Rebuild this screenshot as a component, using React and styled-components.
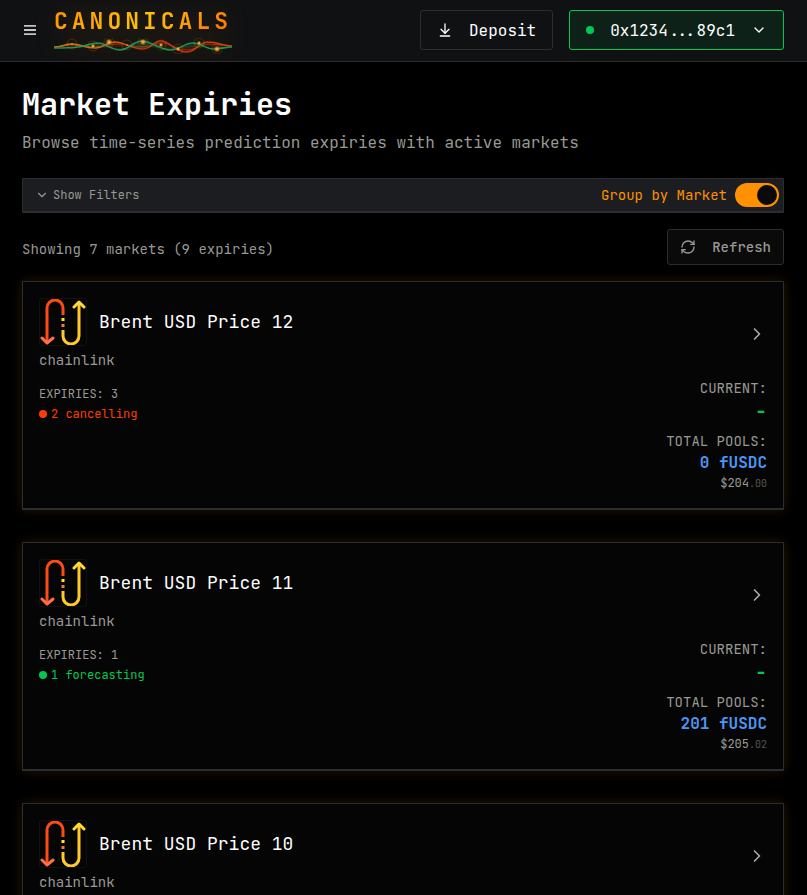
import React, { useState } from 'react';
import styled, { createGlobalStyle, ThemeProvider } from 'styled-components';
import { ArrowDownToLine, ChevronDown, ChevronRight, RefreshCw } from 'lucide-react';

const theme = {
    colors: {
        page: '#000000',
        header: '#101113',
        card: '#050505',
        bar: '#1c1d20',
        border: '#2b2d31',
        white: '#ffffff',
        grey: '#999994',
        dim: '#55544f',
        orange: '#ff9100',
        red: '#ff3d00',
        green: '#00c853',
        blue: '#4c97f5',
    },
};

const GlobalStyle = createGlobalStyle`
    * {
        box-sizing: border-box;
    }
    body {
        margin: 0;
        background: ${props => props.theme.colors.page};
        color: ${props => props.theme.colors.white};
        font-family: "JetBrains Mono", "DejaVu Sans Mono", monospace;
    }
    button {
        font-family: inherit;
        cursor: pointer;
    }
    h1, h2, p {
        margin: 0;
    }
`;

const Header = styled.header`
    display: flex;
    align-items: center;
    justify-content: space-between;
    height: 62px;
    padding: 0 23px 1px 22px;
    background: ${props => props.theme.colors.header};
    border-bottom: 1px solid ${props => props.theme.colors.border};
`;

const HeaderGroup = styled.div`
    display: flex;
    align-items: center;
    gap: 16px;
`;

const MenuButton = styled.button`
    display: flex;
    padding: 0 2px;
    border: none;
    background: none;
    color: #c4c4c4;
`;

const Brand = styled.a`
    display: flex;
    flex-direction: column;
    gap: 2px;
    width: 178px;
    color: ${props => props.theme.colors.orange};
    text-decoration: none;
    filter: drop-shadow(0 0 12px rgba(255, 145, 0, 0.2));
`;

const BrandName = styled.span`
    font-size: 23px;
    font-weight: 600;
    letter-spacing: 4px;
    line-height: 30px;
    white-space: nowrap;
    background: linear-gradient(135deg, #ff9100 0%, #ffc107 50%, #ff6d00 100%);
    background-clip: text;
    color: transparent;
`;

const HeaderButton = styled.button`
    display: flex;
    align-items: center;
    gap: 16px;
    height: 40px;
    padding: 0 16px;
    border: 1px solid ${props => props.$active ? props.theme.colors.green : props.theme.colors.border};
    border-radius: 3px;
    background: ${props => props.$active ? '#0e2118' : 'transparent'};
    color: ${props => props.theme.colors.white};
    font-size: 16px;
`;

const Dot = styled.span`
    width: 8px;
    height: 8px;
    border-radius: 50%;
    background: currentColor;
`;

const OnlineDot = styled(Dot)`
    background: ${props => props.theme.colors.green};
`;

const Main = styled.main`
    padding: 24px 23px 32px 22px;
`;

const Title = styled.h1`
    font-size: 30px;
    font-weight: 600;
    line-height: 36px;
`;

const Tagline = styled.p`
    margin-top: 8px;
    font-size: 16px;
    line-height: 26px;
    color: ${props => props.theme.colors.grey};
`;

const FilterBar = styled.div`
    display: flex;
    align-items: center;
    justify-content: space-between;
    height: 35px;
    margin-top: 22px;
    padding: 0 4px 0 12px;
    border: 1px solid ${props => props.theme.colors.border};
    border-bottom-width: 2px;
    border-radius: 1px;
    background: ${props => props.theme.colors.bar};
`;

const FilterButton = styled.button`
    display: flex;
    align-items: center;
    gap: 4px;
    padding: 0;
    border: none;
    background: none;
    color: ${props => props.theme.colors.grey};
    font-size: 12px;
`;

const ToggleLabel = styled.label`
    display: flex;
    align-items: center;
    gap: 8px;
    color: ${props => props.theme.colors.orange};
    font-size: 14px;
    cursor: pointer;
`;

const Toggle = styled.input`
    appearance: none;
    display: flex;
    width: 44px;
    height: 24px;
    margin: 0;
    padding: 2px;
    border-radius: 12px;
    background: ${props => props.checked ? props.theme.colors.orange : props.theme.colors.border};
    justify-content: ${props => props.checked ? 'flex-end' : 'flex-start'};
    cursor: pointer;
    &::before {
        content: '';
        width: 20px;
        height: 20px;
        border-radius: 50%;
        background: #0a0a0a;
    }
`;

const SummaryRow = styled.div`
    display: flex;
    align-items: center;
    justify-content: space-between;
    margin-top: 16px;
    font-size: 14px;
    color: ${props => props.theme.colors.grey};
`;

const Summary = styled.p`
    padding-top: 4px;
`;

const RefreshButton = styled.button`
    display: flex;
    align-items: center;
    gap: 16px;
    height: 36px;
    padding: 0 12px;
    border: 1px solid ${props => props.theme.colors.border};
    border-radius: 3px;
    background: #0a0a0a;
    color: ${props => props.theme.colors.grey};
    font-size: 14px;
    font-weight: 500;
`;

const CardList = styled.div`
    display: flex;
    flex-direction: column;
    gap: 32px;
    margin-top: 16px;
`;

const Card = styled.article`
    padding: 16px;
    border: 1px solid ${props => props.theme.colors.border};
    border-bottom-width: 2px;
    border-radius: 1px;
    background: ${props => props.theme.colors.card};
    box-shadow: 0 0 12px rgba(255, 145, 0, 0.15);
`;

const CardTop = styled.div`
    display: flex;
    align-items: center;
    justify-content: space-between;
`;

const Market = styled.div`
    display: flex;
    align-items: center;
    gap: 12px;
`;

const MarketIcon = styled.svg`
    width: 48px;
    height: 48px;
    border: 1px solid #111111;
    border-radius: 3px;
`;

const MarketName = styled.h2`
    font-size: 18px;
    font-weight: normal;
    line-height: 28px;
`;

const Source = styled.p`
    margin-top: 4px;
    font-size: 14px;
    line-height: 20px;
    color: ${props => props.theme.colors.grey};
`;

const OpenButton = styled.button`
    display: flex;
    padding: 0;
    border: none;
    background: none;
    color: #aaaaaa;
`;

const CardBody = styled.div`
    display: flex;
    justify-content: space-between;
    margin-top: 8px;
`;

const Expiries = styled.div`
    padding-top: 6px;
    font-size: 12px;
    line-height: 20px;
    color: ${props => props.theme.colors.grey};
`;

const Status = styled.p`
    display: flex;
    align-items: center;
    gap: 4px;
    color: ${props => props.theme.colors[props.$color]};
`;

const Stats = styled.div`
    display: flex;
    flex-direction: column;
    gap: 7px;
    text-align: right;
`;

const StatLabel = styled.p`
    font-size: 14px;
    line-height: 20px;
    color: ${props => props.theme.colors.grey};
`;

const CurrentPrice = styled.p`
    font-size: 20px;
    font-weight: bold;
    line-height: 26px;
    color: ${props => props.theme.colors.green};
`;

const PoolTotal = styled.p`
    font-size: 16px;
    font-weight: bold;
    line-height: 24px;
    color: ${props => props.theme.colors.blue};
`;

const Dollars = styled.p`
    font-size: 12px;
    line-height: 17px;
    color: ${props => props.theme.colors.grey};
`;

const Cents = styled.span`
    font-size: 10px;
    line-height: 1;
    color: ${props => props.theme.colors.dim};
`;

const markets = [
    { name: 'Brent USD Price 12', expiries: 3, status: '2 cancelling', color: 'red', pool: '0', dollars: '204', cents: '00' },
    { name: 'Brent USD Price 11', expiries: 1, status: '1 forecasting', color: 'green', pool: '201', dollars: '205', cents: '02' },
    { name: 'Brent USD Price 10', expiries: 1, status: '1 forecasting', color: 'green', pool: '201', dollars: '205', cents: '02' },
];

const nodes = [
    [18, 6, 1], [39, 8, 2], [55, 4, 3], [73, 7, 1], [89, 4, 3], [107, 7, 2], [124, 11, 2], [145, 5, 2], [163, 11, 3],
];

function MenuIcon() {
    return (
        <svg width="12" height="10" viewBox="0 0 12 10" fill="currentColor" aria-hidden="true">
            <path d="M0 0h12v1.8H0zM0 4.1h12v1.8H0zM0 8.2h12V10H0z" />
        </svg>
    );
}

// Strands twisted round each other, with a glowing node at each crossing
function Wave() {
    return (
        <svg width="178" height="16" viewBox="0 0 178 16" fill="none" aria-hidden="true">
            <defs>
                <linearGradient id="warm">
                    <stop offset="0" stopColor="#b8a020" />
                    <stop offset="0.12" stopColor="#f08a10" />
                    <stop offset="0.35" stopColor="#e0620a" />
                    <stop offset="0.5" stopColor="#c62f0c" />
                    <stop offset="1" stopColor="#d8480c" />
                </linearGradient>
            </defs>
            <path
                d="M0 9C8 9 11 6 18 6S32 10 41 10S52 4 61 4S78 11 88 11S98 3 107 3S121 14 132 14S144 4 154 4S170 8 178 8"
                stroke="url(#warm)" strokeWidth="1.6" strokeOpacity="0.9" fill="#c62f0c" fillOpacity="0.2"
            />
            <path
                d="M0 9C8 9 14 6 22 7S34 9 42 9S54 6 64 6S80 9 88 9S100 5 108 5S122 12 132 12S146 6 154 6S170 8 178 8"
                stroke="#d8480c" strokeOpacity="0.5" strokeWidth="1"
            />
            <path
                d="M0 10C10 10 16 10 24 9S36 5 44 5S57 12 66 12S79 3 88 3S106 12 116 12S130 5 139 5S151 11 159 11S172 9 178 9"
                stroke="#1f9d5b" strokeWidth="1.6" strokeOpacity="0.9" fill="#1f9d5b" fillOpacity="0.2"
            />
            {nodes.map(([x, y, r]) => (
                <g key={x}>
                    <circle cx={x} cy={y} r="5" stroke="#ff9100" strokeOpacity="0.2" />
                    <circle cx={x} cy={y} r={r} fill="#ff9100" fillOpacity="0.4" />
                    <circle cx={x} cy={y} r={r * 0.6} fill="#ffb84d" fillOpacity="0.8" />
                </g>
            ))}
        </svg>
    );
}

// Pair of opposite arrows joined by a dotted line
function PriceIcon() {
    return (
        <MarketIcon viewBox="0 0 46 46" fill="none" aria-hidden="true">
            <path d="M7 43V9a8 8 0 0 1 16 0v7" stroke="#ff4a14" strokeWidth="3" />
            <path d="M2 39l5 5 6-5" stroke="#ff7043" strokeWidth="3" strokeLinecap="round" strokeLinejoin="round" />
            <path d="M23 31v6a8 8 0 0 0 16 0V4" stroke="#ffc928" strokeWidth="3" />
            <path d="M34 8l5-5 5 5" stroke="#ffd83b" strokeWidth="3" strokeLinecap="round" strokeLinejoin="round" />
            <path d="M21.5 19h3v3h-3z" fill="#ffe81f" />
            <path d="M21.5 25h3v3h-3z" fill="#ff7043" />
        </MarketIcon>
    );
}

function MarketCard({ market }) {
    return (
        <Card>
            <CardTop>
                <div>
                    <Market>
                        <PriceIcon />
                        <MarketName>{market.name}</MarketName>
                    </Market>
                    <Source>chainlink</Source>
                </div>
                <OpenButton aria-label={`Open ${market.name}`}>
                    <ChevronRight size={20} />
                </OpenButton>
            </CardTop>
            <CardBody>
                <Expiries>
                    <p>EXPIRIES: {market.expiries}</p>
                    <Status $color={market.color}><Dot />{market.status}</Status>
                </Expiries>
                <Stats>
                    <div>
                        <StatLabel>CURRENT:</StatLabel>
                        <CurrentPrice>-</CurrentPrice>
                    </div>
                    <div>
                        <StatLabel>TOTAL POOLS:</StatLabel>
                        <PoolTotal>{market.pool} fUSDC</PoolTotal>
                        <Dollars>${market.dollars}<Cents>.{market.cents}</Cents></Dollars>
                    </div>
                </Stats>
            </CardBody>
        </Card>
    );
}

export default function App() {
    const [grouped, setGrouped] = useState(true);

    return (
        <ThemeProvider theme={theme}>
            <GlobalStyle />
            <Header>
                <HeaderGroup>
                    <MenuButton aria-label="Menu"><MenuIcon /></MenuButton>
                    <Brand href="#">
                        <BrandName>CANONICALS</BrandName>
                        <Wave />
                    </Brand>
                </HeaderGroup>
                <HeaderGroup>
                    <HeaderButton><ArrowDownToLine size={16} />Deposit</HeaderButton>
                    <HeaderButton $active><OnlineDot />0x1234...89c1<ChevronDown size={16} /></HeaderButton>
                </HeaderGroup>
            </Header>
            <Main>
                <Title>Market Expiries</Title>
                <Tagline>Browse time-series prediction expiries with active markets</Tagline>
                <FilterBar>
                    <FilterButton><ChevronDown size={14} />Show Filters</FilterButton>
                    <ToggleLabel>
                        Group by Market
                        <Toggle type="checkbox" role="switch" checked={grouped} onChange={e => setGrouped(e.target.checked)} />
                    </ToggleLabel>
                </FilterBar>
                <SummaryRow>
                    <Summary>Showing 7 markets (9 expiries)</Summary>
                    <RefreshButton><RefreshCw size={16} />Refresh</RefreshButton>
                </SummaryRow>
                <CardList>
                    {markets.map(market => <MarketCard key={market.name} market={market} />)}
                </CardList>
            </Main>
        </ThemeProvider>
    );
}
